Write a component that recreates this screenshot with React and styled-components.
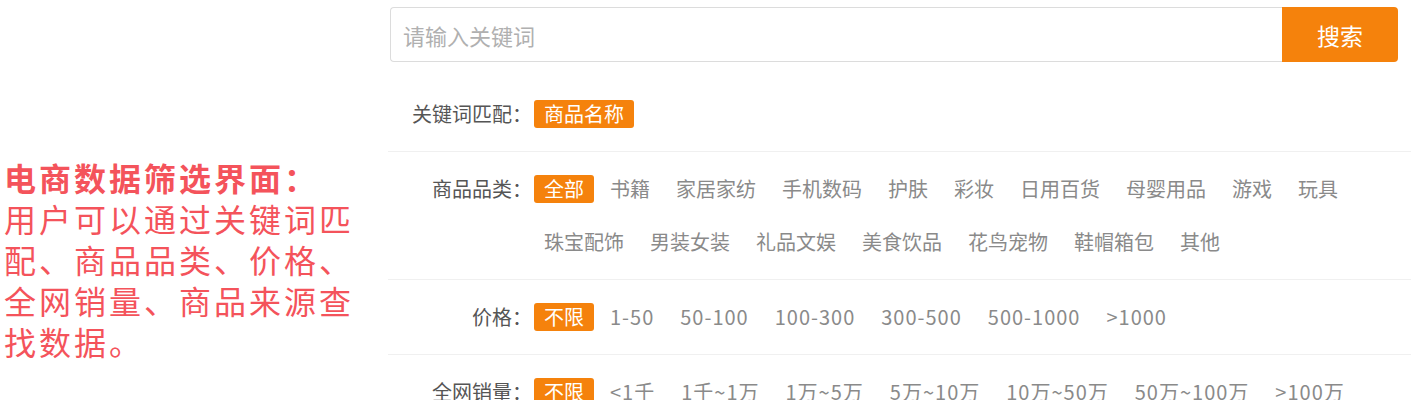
import React, { useState } from "react";
import styled, { createGlobalStyle } from "styled-components";

const GlobalStyle = createGlobalStyle`
  html, body {
    margin: 0;
    padding: 0;
    background: #fff;
  }
  body {
    font-family: "Noto Sans CJK SC", "Noto Sans", sans-serif;
    overflow: hidden;
  }
`;

const Page = styled.div`
  display: flex;
  width: 100%;
  height: 400px;
  overflow: hidden;
`;

const Intro = styled.div`
  width: 380px;
  padding: 157px 4px 0 4px;
  color: #f4535b;
  font-size: 32px;
  line-height: 41px;
  letter-spacing: 3px;
  flex-shrink: 0;
`;

const IntroTitle = styled.div`
  font-weight: 700;
  font-size: 32px;
  letter-spacing: 3px;
`;

const Panel = styled.div`
  flex: 1;
  min-width: 0;
  padding-top: 7px;
`;

const SearchBar = styled.form`
  display: flex;
  height: 55px;
  margin: 0 13px 15px 2px;
`;

const SearchInput = styled.input`
  flex: 1;
  height: 100%;
  box-sizing: border-box;
  border: 1px solid #dcdcdc;
  border-right: none;
  border-radius: 4px 0 0 4px;
  padding: 0 12px;
  font-family: inherit;
  font-size: 22px;
  color: #333;
  outline: none;
  &::placeholder {
    color: #b0b0b0;
  }
`;

const SearchButton = styled.button`
  width: 116px;
  height: 100%;
  border: none;
  border-radius: 0 4px 4px 0;
  background: #f5820c;
  color: #fff;
  font-family: inherit;
  font-size: 23px;
  cursor: pointer;
`;

const Row = styled.div`
  display: flex;
  align-items: flex-start;
  padding: 23px 0;
  border-bottom: 1px solid #f0f0f0;
`;

const Label = styled.div`
  width: 144px;
  flex-shrink: 0;
  text-align: right;
  font-size: 20px;
  line-height: 28px;
  color: #555;
`;

const Options = styled.div`
  flex: 1;
  display: flex;
  flex-wrap: wrap;
  row-gap: 25px;
  margin-left: 2px;
`;

const Option = styled.span`
  height: 28px;
  line-height: 28px;
  padding: 0 10px;
  margin-right: 6px;
  border-radius: 3px;
  font-size: 20px;
  letter-spacing: ${(p) => (p.$numeric && !p.$active ? "1px" : "0")};
  white-space: nowrap;
  cursor: pointer;
  color: ${(p) => (p.$active ? "#fff" : "#8a8a8a")};
  background: ${(p) => (p.$active ? "#f5820c" : "transparent")};
`;

const filters = [
  { label: "关键词匹配：", options: ["商品名称"] },
  {
    label: "商品品类：",
    options: [
      "全部", "书籍", "家居家纺", "手机数码", "护肤", "彩妆", "日用百货",
      "母婴用品", "游戏", "玩具", "珠宝配饰", "男装女装", "礼品文娱",
      "美食饮品", "花鸟宠物", "鞋帽箱包", "其他",
    ],
  },
  {
    label: "价格：",
    numeric: true,
    options: ["不限", "1-50", "50-100", "100-300", "300-500", "500-1000", ">1000"],
  },
  {
    label: "全网销量：",
    numeric: true,
    options: ["不限", "<1千", "1千~1万", "1万~5万", "5万~10万", "10万~50万", "50万~100万", ">100万"],
  },
  {
    label: "商品来源：",
    options: ["不限", "淘宝", "天猫", "京东", "拼多多"],
  },
];

const FilterRow = ({ label, options, numeric }) => {
  const [active, setActive] = useState(0);
  return (
    <Row>
      <Label>{label}</Label>
      <Options>
        {options.map((o, i) => (
          <Option
            key={o}
            $active={i === active}
            $numeric={numeric}
            onClick={() => setActive(i)}
          >
            {o}
          </Option>
        ))}
      </Options>
    </Row>
  );
};

export default function App() {
  return (
    <>
      <GlobalStyle />
      <Page>
        <Intro>
          <IntroTitle>电商数据筛选界面：</IntroTitle>
          用户可以通过关键词匹配、商品品类、价格、全网销量、商品来源查找数据。
        </Intro>
        <Panel>
          <SearchBar onSubmit={(e) => e.preventDefault()}>
            <SearchInput placeholder="请输入关键词" />
            <SearchButton type="submit">搜索</SearchButton>
          </SearchBar>
          {filters.map((f) => (
            <FilterRow key={f.label} {...f} />
          ))}
        </Panel>
      </Page>
    </>
  );
}
